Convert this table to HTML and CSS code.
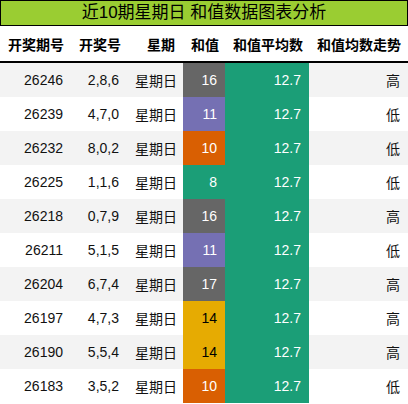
FILE: index.html
```html
<!DOCTYPE html>
<html>
<head>
    <title>近10期星期日 和值数据图表分析</title>
    <link rel="stylesheet" href="styles.css">
</head>
<body>
    <div class="title-bar">近10期星期日 和值数据图表分析</div>
    <table class="sum-table">
        <colgroup>
            <col class="col-issue">
            <col class="col-nums">
            <col class="col-week">
            <col class="col-sum">
            <col class="col-avg">
            <col class="col-trend">
        </colgroup>
        <thead>
            <tr>
                <th>开奖期号</th>
                <th>开奖号</th>
                <th>星期</th>
                <th>和值</th>
                <th>和值平均数</th>
                <th>和值均数走势</th>
            </tr>
        </thead>
        <tbody>
            <tr>
                <td>26246</td><td>2,8,6</td><td>星期日</td>
                <td class="sum sum-16">16</td><td class="avg">12.7</td><td>高</td>
            </tr>
            <tr>
                <td>26239</td><td>4,7,0</td><td>星期日</td>
                <td class="sum sum-11">11</td><td class="avg">12.7</td><td>低</td>
            </tr>
            <tr>
                <td>26232</td><td>8,0,2</td><td>星期日</td>
                <td class="sum sum-10">10</td><td class="avg">12.7</td><td>低</td>
            </tr>
            <tr>
                <td>26225</td><td>1,1,6</td><td>星期日</td>
                <td class="sum sum-8">8</td><td class="avg">12.7</td><td>低</td>
            </tr>
            <tr>
                <td>26218</td><td>0,7,9</td><td>星期日</td>
                <td class="sum sum-16">16</td><td class="avg">12.7</td><td>高</td>
            </tr>
            <tr>
                <td>26211</td><td>5,1,5</td><td>星期日</td>
                <td class="sum sum-11">11</td><td class="avg">12.7</td><td>低</td>
            </tr>
            <tr>
                <td>26204</td><td>6,7,4</td><td>星期日</td>
                <td class="sum sum-17">17</td><td class="avg">12.7</td><td>高</td>
            </tr>
            <tr>
                <td>26197</td><td>4,7,3</td><td>星期日</td>
                <td class="sum sum-14">14</td><td class="avg">12.7</td><td>高</td>
            </tr>
            <tr>
                <td>26190</td><td>5,5,4</td><td>星期日</td>
                <td class="sum sum-14">14</td><td class="avg">12.7</td><td>高</td>
            </tr>
            <tr>
                <td>26183</td><td>3,5,2</td><td>星期日</td>
                <td class="sum sum-10">10</td><td class="avg">12.7</td><td>低</td>
            </tr>
        </tbody>
    </table>
</body>
</html>
```
FILE: styles.css
```css
body {
    margin: 0;
    background-color: #fff;
    color: #111;
    font-family: "Liberation Sans", "Noto Sans CJK SC", sans-serif;
    font-size: 14px;
}

.title-bar {
    height: 24px;
    line-height: 24px;
    border: 1px solid #000;
    background-color: #9acd32;
    color: #000;
    font-size: 17px;
    text-align: center;
}

.sum-table {
    width: 100%;
    border-collapse: collapse;
    table-layout: fixed;
}

.col-issue { width: 71px; }
.col-nums { width: 56px; }
.col-week { width: 56px; }
.col-sum { width: 42px; }
.col-avg { width: 84px; }

.sum-table th,
.sum-table td {
    padding: 0 8px;
    text-align: right;
    white-space: nowrap;
}

.sum-table th {
    height: 35px;
    font-weight: bold;
    color: #000;
    border-bottom: 2px solid #000;
}

.sum-table td {
    height: 34px;
}

.sum-table tbody tr:nth-child(odd) {
    background-color: #f3f3f3;
}

.sum { color: #fff; }
.sum-16, .sum-17 { background-color: #666666; }
.sum-11 { background-color: #7570b3; }
.sum-10 { background-color: #d95f02; }
.sum-8 { background-color: #1b9e77; }
.sum-14 { background-color: #e6ab02; color: #000; }

.avg {
    background-color: #1b9e77;
    color: #fff;
}
```
